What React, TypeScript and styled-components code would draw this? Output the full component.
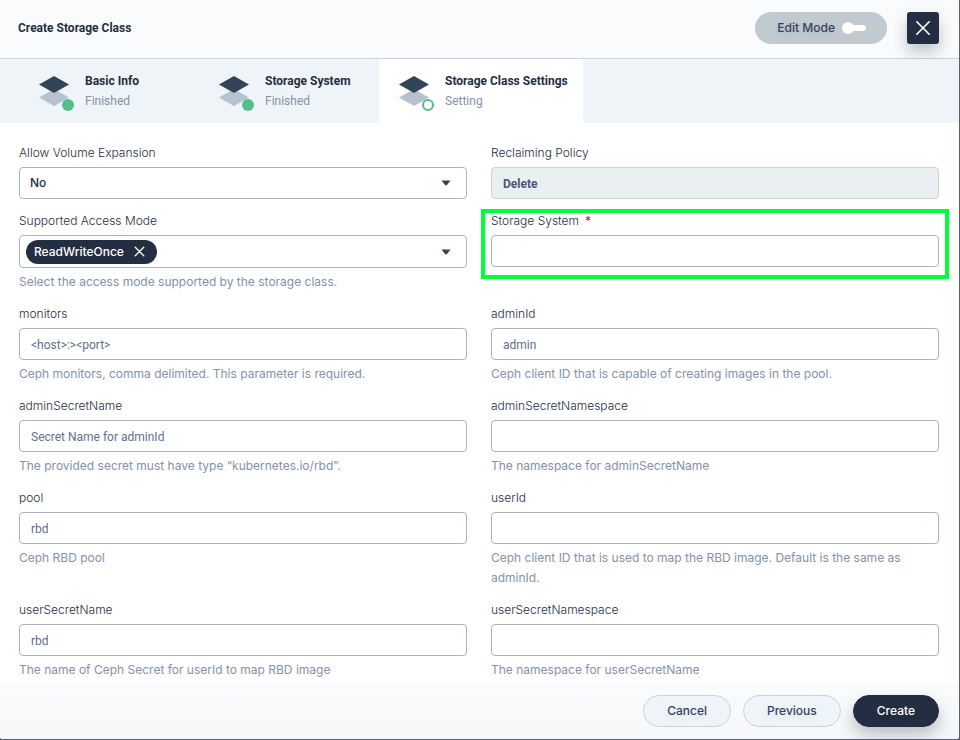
import React, { useId, useState } from "react";
import styled, { createGlobalStyle } from "styled-components";

const ui = '"Inter", "Noto Sans", sans-serif';
const heading = '"Roboto", "Noto Sans", sans-serif';

const color = {
  ink: "#242e42",
  text: "#36435c",
  muted: "#8491a8",
  placeholder: "#5f708a",
  line: "#abb4be",
  softLine: "#ccd3db",
  panel: "#eff4f9",
  bar: "#fafbfd",
  edge: "#586174",
  green: "#55bc8a",
};

const GlobalStyle = createGlobalStyle`
  *, *::before, *::after { box-sizing: border-box; }
  body { margin: 0; background: ${color.edge}; }
  button, input, select { font: inherit; color: inherit; margin: 0; }
  button { cursor: pointer; }
`;

const Dialog = styled.div`
  display: flex;
  flex-direction: column;
  min-height: 100vh;
  border: solid ${color.edge};
  border-width: 0 1px 1px 0;
  border-radius: 0 0 3px 3px;
  background: #fff;
  color: ${color.text};
  font: 400 12px/20px ${ui};
`;

const Header = styled.header`
  display: flex;
  align-items: center;
  gap: 20px;
  padding: 12px 20px 14px 18px;
  border-bottom: 1px solid ${color.softLine};
  background: ${color.bar};
`;

const Title = styled.h1`
  flex: 1;
  margin: 0;
  color: ${color.ink};
  font: 700 12px/20px ${heading};
`;

const ModeSwitch = styled.button`
  display: flex;
  align-items: center;
  gap: 6px;
  height: 32px;
  padding: 0 20px 0 22px;
  border: 0;
  border-radius: 16px;
  background: #c1c9d1;
  color: #36435c;
  font-weight: 500;
  text-shadow: 0 4px 8px rgba(36, 46, 66, 0.1);
`;

const CloseButton = styled.button`
  display: grid;
  place-items: center;
  width: 32px;
  height: 32px;
  padding: 0;
  border: 0;
  border-radius: 3px;
  background: ${color.ink};
  box-shadow: 0 8px 16px rgba(35, 45, 65, 0.28);
`;

const Steps = styled.nav`
  display: flex;
  padding-left: 19px;
  background: ${color.panel};
`;

const Step = styled.button<{ $active?: boolean }>`
  display: flex;
  gap: 11px;
  min-width: 180px;
  height: 64px;
  padding: 12px 15px 12px 19px;
  border: 0;
  background: ${(p) => (p.$active ? "#fff" : "transparent")};
  font-family: ${heading};
  text-align: left;
`;

const StepName = styled.strong`
  display: block;
  color: ${color.ink};
  font-weight: 700;
`;

const StepState = styled.span`
  display: block;
  color: ${color.muted};
`;

const Form = styled.form`
  display: grid;
  grid-template-columns: 1fr 1fr;
  gap: 12px 24px;
  flex: 1;
  align-content: start;
  align-items: start;
  padding: 20px 20px 3px 19px;
`;

const Field = styled.div<{ $highlight?: boolean }>`
  display: flex;
  flex-direction: column;
  gap: 4px;
  position: relative;

  ${(p) =>
    p.$highlight &&
    `&::after {
      content: "";
      position: absolute;
      inset: -2px -10px -12px;
      border: 4px solid #00ff38;
      pointer-events: none;
    }`}
`;

const Label = styled.label`
  color: ${color.ink};
  font-weight: 300;
`;

const Required = styled.span`
  margin-left: 6px;
  color: #d9262e;
  font-weight: 500;
`;

const Hint = styled.p`
  margin: 0;
  color: ${color.muted};
`;

const TextInput = styled.input`
  width: 100%;
  height: 32px;
  padding: 2px 11px 0;
  border: 1px solid ${color.line};
  border-radius: 4px;
  background: #fff;
  font-family: ${heading};

  &::placeholder {
    color: ${color.placeholder};
    opacity: 1;
  }

  &:disabled {
    border-color: ${color.softLine};
    background: #eaeff2;
    color: #4a5974;
    font-weight: 700;
  }
`;

const SelectBox = styled.div`
  display: grid;
  grid-template-columns: 1fr 42px;
  align-items: center;

  & > select {
    grid-area: 1 / 1 / 2 / 3;
  }

  & > svg {
    grid-area: 1 / 2;
    justify-self: center;
    pointer-events: none;
  }
`;

const Select = styled.select`
  appearance: none;
  width: 100%;
  height: 32px;
  padding: 0 40px 0 10px;
  border: 1px solid ${color.line};
  border-radius: 4px;
  background: #fff;
  color: ${color.ink};
  font-weight: 500;
`;

const TagBox = styled.div`
  display: flex;
  align-items: center;
  justify-content: space-between;
  min-height: 33px;
  padding: 0 0 0 6px;
  border: 1px solid ${color.line};
  border-radius: 4px;
`;

const Tag = styled.span`
  display: flex;
  align-items: center;
  gap: 10px;
  height: 24px;
  padding: 0 11px 0 8px;
  border-radius: 12px;
  background: ${color.ink};
  color: #fff;
  font-weight: 500;
`;

const IconButton = styled.button<{ $width: number }>`
  display: grid;
  place-items: center;
  width: ${(p) => p.$width}px;
  height: 24px;
  padding: 0;
  border: 0;
  background: none;
`;

const Footer = styled.footer`
  display: flex;
  justify-content: flex-end;
  gap: 12px;
  padding: 12px 20px;
  border-radius: 0 0 3px 3px;
  background: linear-gradient(${color.bar}, #f5f7f9);
`;

const Button = styled.button<{ $primary?: boolean }>`
  height: 32px;
  padding: 0 23px;
  border: 1px solid ${(p) => (p.$primary ? color.ink : color.softLine)};
  border-radius: 16px;
  background: ${(p) => (p.$primary ? color.ink : color.panel)};
  box-shadow: ${(p) => (p.$primary ? "0 8px 16px rgba(35, 45, 65, 0.28)" : "none")};
  color: ${(p) => (p.$primary ? "#fff" : color.text)};
  font-weight: 500;
  text-shadow: 0 4px 8px rgba(36, 46, 66, 0.1);
`;

function StackIcon({ done }: { done: boolean }) {
  return (
    <svg width="36" height="40" viewBox="0 0 36 40" aria-hidden="true">
      <path d="M1 26.5 16 18l15 8.5L16 35z" fill="#b6c2cd" />
      <path d="M1 13.5 16 5l15 8.5L16 22z" fill="#324558" />
      {done ? (
        <circle cx="30" cy="34" r="6" fill={color.green} />
      ) : (
        <circle cx="30" cy="34" r="5" fill="#fff" stroke={color.green} strokeWidth="2" />
      )}
    </svg>
  );
}

function Cross({ size, stroke }: { size: number; stroke: number }) {
  return (
    <svg width={size} height={size} viewBox="0 0 16 16" aria-hidden="true">
      <path d="M1.8 1.8l12.4 12.4M14.2 1.8l-12.4 12.4" stroke="#fff" strokeWidth={stroke} strokeLinecap="round" />
    </svg>
  );
}

function Caret() {
  return (
    <svg width="10" height="6" viewBox="0 0 10 6" aria-hidden="true">
      <path d="M.5.5h9L6 5Q5 5.8 4 5z" fill="#324558" />
    </svg>
  );
}

function Toggle() {
  return (
    <svg width="26" height="14" viewBox="0 0 26 14" aria-hidden="true">
      <rect x="4" y="4" width="21" height="6" rx="3" fill="#fff" />
      <circle cx="7" cy="7" r="6" fill="#fff" />
    </svg>
  );
}

type TextFieldProps = {
  label: string;
  hint?: string;
  placeholder?: string;
  value?: string;
  disabled?: boolean;
  required?: boolean;
};

function TextField({ label, hint, placeholder, value, disabled, required }: TextFieldProps) {
  const id = useId();
  return (
    <Field $highlight={required}>
      <Label htmlFor={id}>
        {label}
        {required && <Required>*</Required>}
      </Label>
      <TextInput
        id={id}
        type="text"
        placeholder={placeholder}
        defaultValue={value}
        disabled={disabled}
        required={required}
      />
      {hint && <Hint>{hint}</Hint>}
    </Field>
  );
}

const steps = [
  { name: "Basic Info", state: "Finished" },
  { name: "Storage System", state: "Finished" },
  { name: "Storage Class Settings", state: "Setting" },
];

const parameters: TextFieldProps[] = [
  {
    label: "monitors",
    placeholder: "<host>:><port>",
    hint: "Ceph monitors, comma delimited. This parameter is required.",
  },
  {
    label: "adminId",
    placeholder: "admin",
    hint: "Ceph client ID that is capable of creating images in the pool.",
  },
  {
    label: "adminSecretName",
    placeholder: "Secret Name for adminId",
    hint: "The provided secret must have type “kubernetes.io/rbd”.",
  },
  { label: "adminSecretNamespace", hint: "The namespace for adminSecretName" },
  { label: "pool", placeholder: "rbd", hint: "Ceph RBD pool" },
  {
    label: "userId",
    hint: "Ceph client ID that is used to map the RBD image. Default is the same as adminId.",
  },
  {
    label: "userSecretName",
    placeholder: "rbd",
    hint: "The name of Ceph Secret for userId to map RBD image",
  },
  { label: "userSecretNamespace", hint: "The namespace for userSecretName" },
];

export default function App() {
  const [editMode, setEditMode] = useState(false);
  const [modes, setModes] = useState(["ReadWriteOnce"]);

  return (
    <>
      <GlobalStyle />
      <Dialog role="dialog" aria-labelledby="dialog-title">
        <Header>
          <Title id="dialog-title">Create Storage Class</Title>
          <ModeSwitch type="button" role="switch" aria-checked={editMode} onClick={() => setEditMode(!editMode)}>
            Edit Mode
            <Toggle />
          </ModeSwitch>
          <CloseButton type="button" aria-label="Close">
            <Cross size={16} stroke={1.6} />
          </CloseButton>
        </Header>

        <Steps aria-label="Steps">
          {steps.map((step) => {
            const active = step.state === "Setting";
            return (
              <Step key={step.name} type="button" $active={active} aria-current={active ? "step" : undefined}>
                <StackIcon done={!active} />
                <span>
                  <StepName>{step.name}</StepName>
                  <StepState>{step.state}</StepState>
                </span>
              </Step>
            );
          })}
        </Steps>

        <Form id="settings" onSubmit={(e) => e.preventDefault()}>
          <Field>
            <Label htmlFor="expansion">Allow Volume Expansion</Label>
            <SelectBox>
              <Select id="expansion" defaultValue="No">
                <option>No</option>
                <option>Yes</option>
              </Select>
              <Caret />
            </SelectBox>
          </Field>
          <TextField label="Reclaiming Policy" value="Delete" disabled />
          <Field>
            <Label as="span" id="access-mode">
              Supported Access Mode
            </Label>
            <TagBox role="group" aria-labelledby="access-mode">
              {modes.map((mode) => (
                <Tag key={mode}>
                  {mode}
                  <IconButton
                    type="button"
                    $width={12}
                    aria-label={`Remove ${mode}`}
                    onClick={() => setModes(modes.filter((m) => m !== mode))}
                  >
                    <Cross size={11} stroke={1.9} />
                  </IconButton>
                </Tag>
              ))}
              <IconButton type="button" $width={40} aria-label="Choose access modes">
                <Caret />
              </IconButton>
            </TagBox>
            <Hint>Select the access mode supported by the storage class.</Hint>
          </Field>
          <TextField label="Storage System" required />
          {parameters.map((field) => (
            <TextField key={field.label} {...field} />
          ))}
        </Form>

        <Footer>
          <Button type="button">Cancel</Button>
          <Button type="button">Previous</Button>
          <Button type="submit" form="settings" $primary>
            Create
          </Button>
        </Footer>
      </Dialog>
    </>
  );
}
